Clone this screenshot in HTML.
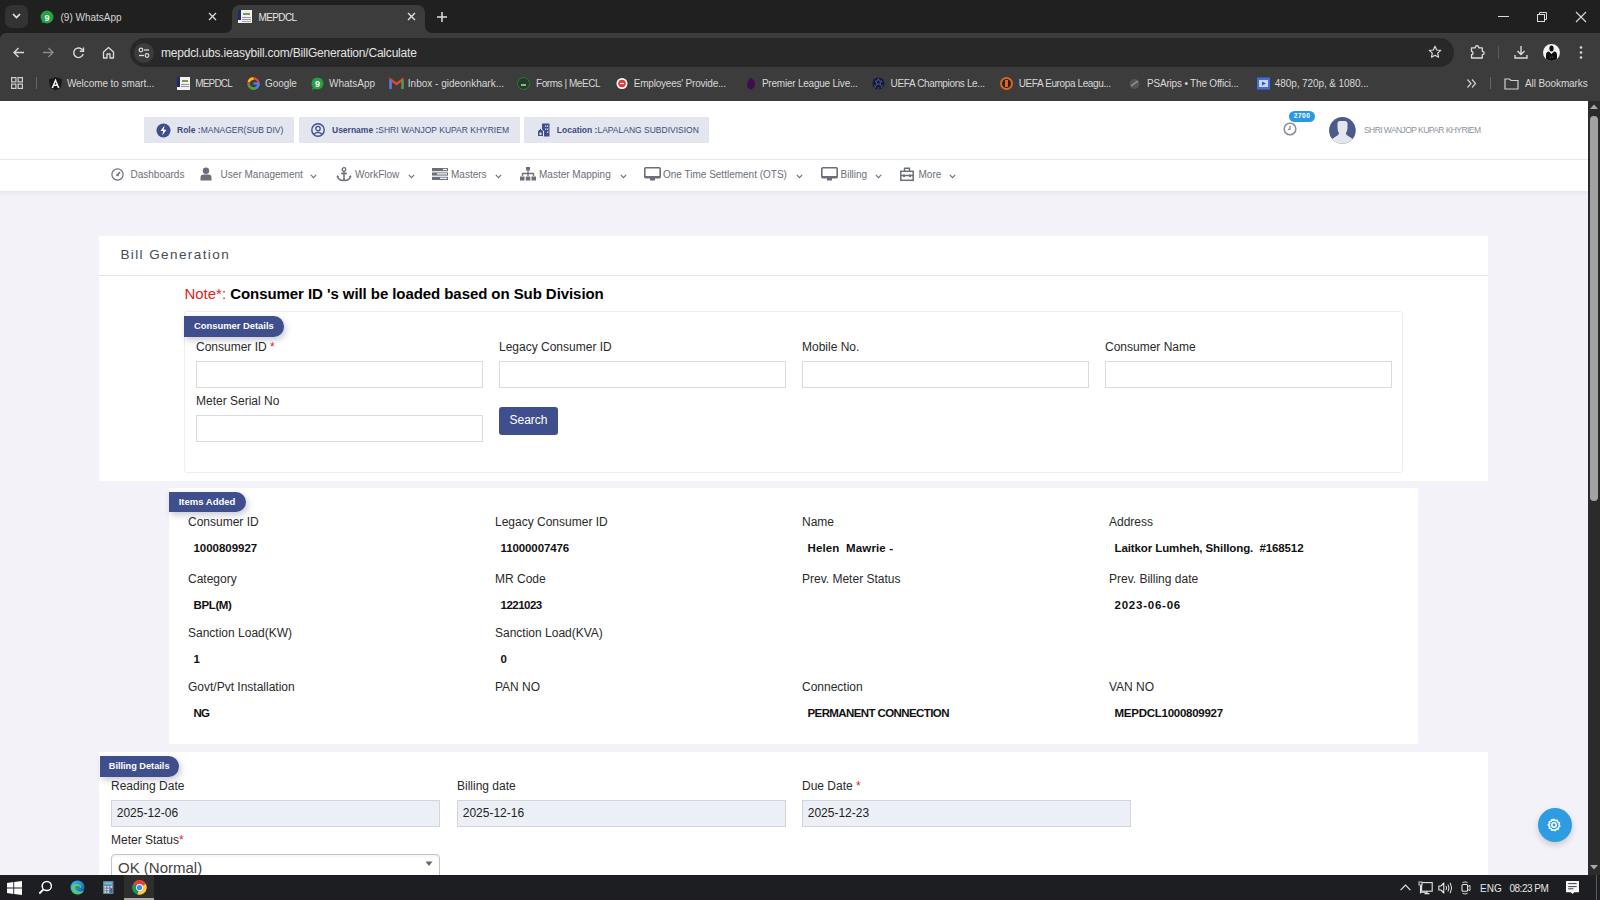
<!DOCTYPE html>
<html><head><meta charset="utf-8"><style>
html,body{margin:0;padding:0;width:1600px;height:900px;overflow:hidden;background:#202020;position:relative;font-family:"Liberation Sans",sans-serif}
.t{position:absolute;white-space:pre;line-height:1}
svg{overflow:visible}
</style></head><body>
<div style="position:absolute;left:0px;top:0px;width:1600px;height:33px;background:#202020"></div>
<div style="position:absolute;left:0px;top:33px;width:1600px;height:68px;background:#3c3c3c;border-top-left-radius:6px"></div>
<div style="position:absolute;left:5px;top:5px;width:23px;height:23px;background:#333;border-radius:7px"></div>
<svg style="position:absolute;left:11px;top:12px;" width="11" height="8" viewBox="0 0 11 8"><path d="M2 2 L5.5 5.5 L9 2" stroke="#e8e8e8" stroke-width="1.6" fill="none"/></svg>
<svg style="position:absolute;left:40px;top:10px;" width="14" height="14" viewBox="0 0 14 14"><circle cx="7" cy="7" r="6.5" fill="#25a244"/><path d="M1.5 13 L3 9.5 L5 12 Z" fill="#25a244"/><text x="7" y="10.5" font-size="9" font-weight="700" fill="#fff" text-anchor="middle" font-family="Liberation Sans">9</text></svg>
<div class="t" style="left:60.5px;top:12.54px;font-size:10px;font-weight:400;color:#d5d5d5;letter-spacing:0px;">(9) WhatsApp</div>
<svg style="position:absolute;left:207px;top:11px;" width="11" height="11" viewBox="0 0 11 11"><path d="M2 2 L9 9 M9 2 L2 9" stroke="#d8d8d8" stroke-width="1.4"/></svg>
<div style="position:absolute;left:232px;top:5px;width:193px;height:30px;background:#3c3c3c;border-radius:8px 8px 0 0"></div>
<svg style="position:absolute;left:224px;top:25px;" width="8" height="8" viewBox="0 0 8 8"><path d="M8 0 V8 H0 Q8 8 8 0 Z" fill="#3c3c3c"/></svg>
<svg style="position:absolute;left:425px;top:25px;" width="8" height="8" viewBox="0 0 8 8"><path d="M0 0 V8 H8 Q0 8 0 0 Z" fill="#3c3c3c"/></svg>
<svg style="position:absolute;left:238px;top:10px;" width="14" height="13" viewBox="0 0 14 13"><rect x="0" y="0" width="14" height="13" fill="#f2f2f2"/><rect x="0" y="0" width="3" height="10" fill="#1b2a6b"/><rect x="5" y="3" width="7" height="2" fill="#7a9a5a"/><rect x="4" y="7" width="9" height="1" fill="#999"/><rect x="4" y="9" width="9" height="1" fill="#999"/><rect x="4" y="11" width="9" height="1" fill="#aaa"/></svg>
<div class="t" style="left:258.5px;top:12.54px;font-size:10px;font-weight:400;color:#e6e6e6;letter-spacing:-0.6px;">MEPDCL</div>
<svg style="position:absolute;left:406px;top:11px;" width="11" height="11" viewBox="0 0 11 11"><path d="M2 2 L9 9 M9 2 L2 9" stroke="#e0e0e0" stroke-width="1.4"/></svg>
<svg style="position:absolute;left:436px;top:11px;" width="12" height="12" viewBox="0 0 12 12"><path d="M6 1 V11 M1 6 H11" stroke="#e0e0e0" stroke-width="1.5"/></svg>
<svg style="position:absolute;left:1497px;top:11px;" width="13" height="11" viewBox="0 0 13 11"><path d="M1 5.5 H12" stroke="#dcdcdc" stroke-width="1"/></svg>
<svg style="position:absolute;left:1536px;top:11px;" width="12" height="12" viewBox="0 0 12 12"><rect x="1.5" y="3.5" width="7" height="7" stroke="#dcdcdc" fill="none"/><path d="M3.5 3.5 V1.5 H10.5 V8.5 H8.5" stroke="#dcdcdc" fill="none"/></svg>
<svg style="position:absolute;left:1575px;top:11px;" width="12" height="12" viewBox="0 0 12 12"><path d="M1 1 L11 11 M11 1 L1 11" stroke="#dcdcdc" stroke-width="1.1"/></svg>
<svg style="position:absolute;left:12px;top:46px;" width="13" height="13" viewBox="0 0 13 13"><path d="M12 6.5 H2 M6.5 2 L2 6.5 L6.5 11" stroke="#dadada" stroke-width="1.4" fill="none"/></svg>
<svg style="position:absolute;left:42px;top:46px;" width="13" height="13" viewBox="0 0 13 13"><path d="M1 6.5 H11 M6.5 2 L11 6.5 L6.5 11" stroke="#8a8a8a" stroke-width="1.4" fill="none"/></svg>
<svg style="position:absolute;left:72px;top:46px;" width="13" height="13" viewBox="0 0 13 13"><path d="M10.8 4.5 A4.8 4.8 0 1 0 11.2 8" stroke="#dadada" stroke-width="1.4" fill="none"/><path d="M11.5 1.5 V5.2 H7.8" stroke="#dadada" stroke-width="1.4" fill="none"/></svg>
<svg style="position:absolute;left:102px;top:46px;" width="13" height="13" viewBox="0 0 13 13"><path d="M1.5 6 L6.5 1.5 L11.5 6 V12 H8 V8 H5 V12 H1.5 Z" stroke="#dadada" stroke-width="1.3" fill="none" stroke-linejoin="round"/></svg>
<div style="position:absolute;left:130px;top:38px;width:1324px;height:29px;background:#282828;border-radius:15px"></div>
<div style="position:absolute;left:134px;top:42.5px;width:20px;height:20px;background:#3c3c3c;border-radius:10px"></div>
<svg style="position:absolute;left:137px;top:46px;" width="14" height="14" viewBox="0 0 14 14"><circle cx="4" cy="4" r="1.8" stroke="#dcdcdc" stroke-width="1.2" fill="none"/><path d="M7 4 H12" stroke="#dcdcdc" stroke-width="1.3"/><circle cx="10" cy="9.5" r="1.8" stroke="#dcdcdc" stroke-width="1.2" fill="none"/><path d="M2 9.5 H7" stroke="#dcdcdc" stroke-width="1.3"/></svg>
<div class="t" style="left:161px;top:46.84px;font-size:12px;font-weight:400;color:#e3e3e3;letter-spacing:-0.2px;">mepdcl.ubs.ieasybill.com/BillGeneration/Calculate</div>
<svg style="position:absolute;left:1428px;top:45px;" width="14" height="14" viewBox="0 0 14 14"><path d="M7 1.3 L8.7 5 L12.7 5.4 L9.7 8.1 L10.5 12.2 L7 10.2 L3.5 12.2 L4.3 8.1 L1.3 5.4 L5.3 5 Z" stroke="#dadada" stroke-width="1.2" fill="none" stroke-linejoin="round"/></svg>
<svg style="position:absolute;left:1470px;top:44px;" width="16" height="16" viewBox="0 0 16 16"><path d="M1.5 3.8 H5.3 Q5.3 1.6 7 1.6 Q8.7 1.6 8.7 3.8 H12.3 V7.3 Q14.2 7.3 14.2 9 Q14.2 10.7 12.3 10.7 V14 H1.5 V10.6 Q3 10.6 3 9 Q3 7.4 1.5 7.4 Z" stroke="#dadada" stroke-width="1.3" fill="none" stroke-linejoin="round"/></svg>
<div style="position:absolute;left:1498px;top:46px;width:1px;height:13px;background:#5a5a5a"></div>
<svg style="position:absolute;left:1513px;top:44px;" width="16" height="16" viewBox="0 0 16 16"><path d="M8 2 V10 M4.5 7 L8 10.5 L11.5 7 M2 11 V14 H14 V11" stroke="#dadada" stroke-width="1.4" fill="none"/></svg>
<svg style="position:absolute;left:1543px;top:44px;" width="17" height="17" viewBox="0 0 17 17"><defs><clipPath id="pf"><circle cx="8.5" cy="8.5" r="8.5"/></clipPath></defs><circle cx="8.5" cy="8.5" r="8.5" fill="#f2f2f2"/><g clip-path="url(#pf)" fill="#0e0e0e"><ellipse cx="8.5" cy="4.6" rx="2.1" ry="3"/><path d="M3 18 V11 Q3 8 6 7.6 L8.5 10 L11 7.6 Q14 8 14 11 V18 Z"/></g><circle cx="7.3" cy="13" r="0.6" fill="#777"/><circle cx="9.7" cy="13" r="0.6" fill="#777"/></svg>
<svg style="position:absolute;left:1578px;top:45px;" width="6" height="15" viewBox="0 0 6 15"><circle cx="3" cy="2.5" r="1.3" fill="#dadada"/><circle cx="3" cy="7.5" r="1.3" fill="#dadada"/><circle cx="3" cy="12.5" r="1.3" fill="#dadada"/></svg>
<svg style="position:absolute;left:11px;top:77px;" width="12" height="12" viewBox="0 0 12 12"><rect x="0.6" y="0.6" width="4.3" height="4.3" stroke="#d0d0d0" stroke-width="1.2" fill="none"/><rect x="7.1" y="0.6" width="4.3" height="4.3" stroke="#d0d0d0" stroke-width="1.2" fill="none"/><rect x="0.6" y="7.1" width="4.3" height="4.3" stroke="#d0d0d0" stroke-width="1.2" fill="none"/><rect x="7.1" y="7.1" width="4.3" height="4.3" stroke="#d0d0d0" stroke-width="1.2" fill="none"/></svg>
<div style="position:absolute;left:35.5px;top:77px;width:1px;height:12px;background:#666"></div>
<svg style="position:absolute;left:49px;top:77px;" width="13" height="13" viewBox="0 0 13 13"><path d="M6.5 0 L13 2.3 L12 10.5 L6.5 13.5 L1 10.5 L0 2.3 Z" fill="#1a1a1a"/><path d="M6.5 1.5 L10.5 11 H8.8 L8 9 H5 L4.2 11 H2.5 Z M5.6 7.6 H7.4 L6.5 5.2 Z" fill="#f0f0f0"/></svg>
<div class="t" style="left:66.9px;top:78.53px;font-size:10px;font-weight:400;color:#d9d9d9;letter-spacing:-0.07px;">Welcome to smart...</div>
<svg style="position:absolute;left:176.5px;top:77px;" width="13" height="13" viewBox="0 0 13 13"><rect x="0" y="0" width="13" height="13" fill="#f2f2f2"/><rect x="0" y="0" width="3" height="10" fill="#1b2a6b"/><rect x="5" y="3" width="6" height="2" fill="#7a9a5a"/><rect x="4" y="7" width="8" height="1" fill="#999"/><rect x="4" y="9" width="8" height="1" fill="#999"/></svg>
<div class="t" style="left:195.3px;top:78.53px;font-size:10px;font-weight:400;color:#d9d9d9;letter-spacing:-0.84px;">MEPDCL</div>
<svg style="position:absolute;left:247px;top:77px;" width="13" height="13" viewBox="0 0 13 13"><circle cx="6.5" cy="6.5" r="5" stroke="#ea4335" stroke-width="2.4" fill="none"/><path d="M6.5 1.5 A5 5 0 0 0 1.7 5" stroke="#fbbc05" stroke-width="2.4" fill="none"/><path d="M1.6 7.5 A5 5 0 0 0 9 10.9" stroke="#34a853" stroke-width="2.4" fill="none"/><path d="M9 10.9 A5 5 0 0 0 11.5 6.5" stroke="#4285f4" stroke-width="2.4" fill="none"/><rect x="6.5" y="5.4" width="5.8" height="2.2" fill="#4285f4"/></svg>
<div class="t" style="left:265px;top:78.53px;font-size:10px;font-weight:400;color:#d9d9d9;letter-spacing:-0.07px;">Google</div>
<svg style="position:absolute;left:311px;top:77px;" width="13" height="13" viewBox="0 0 13 13"><circle cx="6.5" cy="6.5" r="6" fill="#25a244"/><path d="M1 13 L2.5 9 L4.5 11.5 Z" fill="#25a244"/><text x="6.5" y="10" font-size="9" font-weight="700" fill="#fff" text-anchor="middle" font-family="Liberation Sans">9</text></svg>
<div class="t" style="left:329px;top:78.53px;font-size:10px;font-weight:400;color:#d9d9d9;letter-spacing:0px;">WhatsApp</div>
<svg style="position:absolute;left:389.7px;top:77px;" width="13" height="13" viewBox="0 0 13 13"><path d="M0.5 12 V2.5 L6.5 7 L12.5 2.5 V12" stroke="#ea4335" stroke-width="2.2" fill="none"/><path d="M0.5 12 V3" stroke="#4285f4" stroke-width="2.2"/><path d="M12.5 12 V3" stroke="#34a853" stroke-width="2.2"/></svg>
<div class="t" style="left:407.8px;top:78.53px;font-size:10px;font-weight:400;color:#d9d9d9;letter-spacing:0px;">Inbox - gideonkhark...</div>
<svg style="position:absolute;left:517px;top:77px;" width="13" height="13" viewBox="0 0 13 13"><circle cx="6.5" cy="6.5" r="6" fill="#1e3d2a" stroke="#2b7a3b" stroke-width="1"/><rect x="4" y="7" width="5" height="2" fill="#b9a27a"/></svg>
<div class="t" style="left:536px;top:78.53px;font-size:10px;font-weight:400;color:#d9d9d9;letter-spacing:-0.44px;">Forms | MeECL</div>
<svg style="position:absolute;left:616px;top:77px;" width="13" height="13" viewBox="0 0 13 13"><circle cx="6" cy="6.5" r="5.5" fill="#fff"/><circle cx="6" cy="6.5" r="3.8" fill="#e23a3a"/><path d="M4 6.5 H8" stroke="#fff" stroke-width="1.2"/></svg>
<div class="t" style="left:633.75px;top:78.53px;font-size:10px;font-weight:400;color:#d9d9d9;letter-spacing:-0.21px;">Employees&#39; Provide...</div>
<svg style="position:absolute;left:745px;top:77px;" width="13" height="13" viewBox="0 0 13 13"><path d="M5 1 Q9 2 10 6 Q10.5 11 6 12.5 Q2 11.5 2 8 Q2.5 4 5 1 Z" fill="#3d0d4f"/></svg>
<div class="t" style="left:761.9px;top:78.53px;font-size:10px;font-weight:400;color:#d9d9d9;letter-spacing:-0.22px;">Premier League Live...</div>
<svg style="position:absolute;left:872px;top:77px;" width="13" height="13" viewBox="0 0 13 13"><circle cx="6.5" cy="6.5" r="6" fill="#141a3c"/><path d="M6.5 1.5 L7.5 4 L10 4.2 L8 5.8 L8.7 8.3 L6.5 6.9 L4.3 8.3 L5 5.8 L3 4.2 L5.5 4 Z M2 8.5 L3.5 9 L3 11 M11 8.5 L9.5 9 L10 11 M6.5 10 V12" stroke="#5a6290" stroke-width="0.8" fill="none"/></svg>
<div class="t" style="left:890.6px;top:78.53px;font-size:10px;font-weight:400;color:#d9d9d9;letter-spacing:-0.36px;">UEFA Champions Le...</div>
<svg style="position:absolute;left:1000px;top:77px;" width="13" height="13" viewBox="0 0 13 13"><circle cx="6.5" cy="6.5" r="5.5" stroke="#e0661b" stroke-width="2" fill="#222"/><rect x="5" y="3" width="3" height="7" fill="#e0661b"/></svg>
<div class="t" style="left:1018.7px;top:78.53px;font-size:10px;font-weight:400;color:#d9d9d9;letter-spacing:-0.38px;">UEFA Europa Leagu...</div>
<svg style="position:absolute;left:1127.5px;top:77px;" width="13" height="13" viewBox="0 0 13 13"><circle cx="6.5" cy="7" r="5" fill="#555"/><path d="M3 9 L10 4" stroke="#999" stroke-width="1.5"/></svg>
<div class="t" style="left:1147px;top:78.53px;font-size:10px;font-weight:400;color:#d9d9d9;letter-spacing:-0.19px;">PSArips &bull; The Offici...</div>
<svg style="position:absolute;left:1256.8px;top:77px;" width="13" height="13" viewBox="0 0 13 13"><rect x="0" y="0.5" width="13" height="12" fill="#3f6fd8"/><rect x="2" y="3" width="9" height="7" fill="#c8d6f5"/><path d="M5 4.5 L9 6.5 L5 8.5 Z" fill="#2a56c0"/></svg>
<div class="t" style="left:1274.8px;top:78.53px;font-size:10px;font-weight:400;color:#d9d9d9;letter-spacing:-0.09px;">480p, 720p, &amp; 1080...</div>
<svg style="position:absolute;left:1466px;top:78px;" width="11" height="11" viewBox="0 0 11 11"><path d="M1.5 1.5 L5 5.5 L1.5 9.5 M6 1.5 L9.5 5.5 L6 9.5" stroke="#d0d0d0" stroke-width="1.2" fill="none"/></svg>
<div style="position:absolute;left:1490px;top:77px;width:1px;height:12px;background:#666"></div>
<svg style="position:absolute;left:1504px;top:77px;" width="15" height="13" viewBox="0 0 15 13"><path d="M1 2 H5.5 L7 3.5 H14 V12 H1 Z" stroke="#d0d0d0" stroke-width="1.2" fill="none"/></svg>
<div class="t" style="left:1525px;top:78.53px;font-size:10px;font-weight:400;color:#d9d9d9;letter-spacing:-0.1px;">All Bookmarks</div>
<div style="position:absolute;left:0px;top:101px;width:1588px;height:774px;background:#f2f2f8"></div>
<div style="position:absolute;left:0px;top:101px;width:1588px;height:58px;background:#fff"></div>
<div style="position:absolute;left:0px;top:159px;width:1588px;height:1px;background:#e9e9ee"></div>
<div style="position:absolute;left:0px;top:160px;width:1588px;height:31px;background:#fff;box-shadow:0 2px 4px rgba(0,0,0,0.06)"></div>
<div style="position:absolute;left:144px;top:117px;width:150px;height:26px;background:#e3e6ee"></div>
<div style="position:absolute;left:298.5px;top:117px;width:221.5px;height:26px;background:#e3e6ee"></div>
<div style="position:absolute;left:524px;top:117px;width:185px;height:26px;background:#e3e6ee"></div>
<svg style="position:absolute;left:156px;top:123px;" width="15" height="15" viewBox="0 0 15 15"><circle cx="7.5" cy="7.5" r="7" fill="#3f4e8c"/><path d="M8.5 2.5 L4.5 8 H7.2 L6.2 12.5 L10.5 6.8 H7.8 Z" fill="#fff"/></svg>
<div class="t" style="left:177px;top:126.00px;font-size:8.5px;font-weight:400;color:#3d4a7a;letter-spacing:0px;"><b>Role :</b>MANAGER(SUB DIV)</div>
<svg style="position:absolute;left:311px;top:123px;" width="14" height="14" viewBox="0 0 14 14"><circle cx="7" cy="7" r="6.2" stroke="#3f4e8c" stroke-width="1.4" fill="none"/><circle cx="7" cy="5.6" r="2.2" stroke="#3f4e8c" stroke-width="1.3" fill="none"/><path d="M3 11.3 Q7 7.5 11 11.3" stroke="#3f4e8c" stroke-width="1.3" fill="none"/></svg>
<div class="t" style="left:332px;top:126.00px;font-size:8.5px;font-weight:400;color:#3d4a7a;letter-spacing:0px;"><b>Username :</b>SHRI WANJOP KUPAR KHYRIEM</div>
<svg style="position:absolute;left:536.5px;top:123px;" width="13" height="14" viewBox="0 0 13 14"><path d="M5 0.5 H12.5 V13.5 H5 Z" fill="#3f4e8c"/><path d="M0.5 13.5 V8 L3.5 5.5 L6.5 8 V13.5 Z" fill="#3f4e8c" stroke="#e3e6ee" stroke-width="1"/><rect x="2.5" y="9.5" width="2" height="2.5" fill="#e3e6ee"/><rect x="8" y="2.5" width="1.3" height="1.3" fill="#e3e6ee"/><rect x="10" y="2.5" width="1.3" height="1.3" fill="#e3e6ee"/><rect x="8" y="5.5" width="1.3" height="1.3" fill="#e3e6ee"/><rect x="10" y="5.5" width="1.3" height="1.3" fill="#e3e6ee"/><rect x="10" y="8.5" width="1.3" height="1.3" fill="#e3e6ee"/></svg>
<div class="t" style="left:556.8px;top:126.00px;font-size:8.5px;font-weight:400;color:#3d4a7a;letter-spacing:0px;"><b>Location :</b>LAPALANG SUBDIVISION</div>
<svg style="position:absolute;left:1283px;top:122px;" width="14" height="14" viewBox="0 0 14 14"><circle cx="7" cy="7" r="5.8" stroke="#8a8f9a" stroke-width="1.6" fill="none"/><path d="M7 3.8 V7.3 H4.8" stroke="#8a8f9a" stroke-width="1.3" fill="none"/></svg>
<div style="position:absolute;left:1289px;top:111px;width:26px;height:11px;background:#2a9ae0;border-radius:6px"></div>
<div class="t" style="left:1293.8px;top:112.71px;font-size:6.6px;font-weight:700;color:#fff;letter-spacing:0.45px;">2700</div>
<svg style="position:absolute;left:1329px;top:116.5px;" width="27" height="27" viewBox="0 0 27 27"><defs><clipPath id="av"><circle cx="13.4" cy="13.4" r="13.3"/></clipPath></defs><circle cx="13.4" cy="13.4" r="13.3" fill="#4d5a8c"/><g clip-path="url(#av)"><path d="M8.5 6.5 Q8.5 4 11 4 H15.8 Q18.5 4 18.5 6.5 V11 Q18.5 14 16.8 16 Q17 18.5 20 19.5 Q25 22 27 25.5 V28 H0 V25.5 Q2 22 6.8 19.5 Q9.8 18.5 10 16 Q8.5 14 8.5 11 Z" fill="#e3e6ec"/></g></svg>
<div class="t" style="left:1364px;top:125.80px;font-size:8.5px;font-weight:400;color:#8d929c;letter-spacing:-0.57px;">SHRI WANJOP KUPAR KHYRIEM</div>
<svg style="position:absolute;left:111px;top:168px;" width="13" height="13" viewBox="0 0 13 13"><circle cx="6.5" cy="6.5" r="5.6" stroke="#6b6f78" stroke-width="1.2" fill="none"/><path d="M6.5 7 L9 4" stroke="#6b6f78" stroke-width="1.4"/><circle cx="6.5" cy="7" r="1.3" fill="#6b6f78"/></svg>
<div class="t" style="left:130.5px;top:170.34px;font-size:10px;font-weight:400;color:#6b6f78;letter-spacing:0px;">Dashboards</div>
<svg style="position:absolute;left:200px;top:167px;" width="12" height="14" viewBox="0 0 12 14"><circle cx="6" cy="3.8" r="3.2" fill="#6b6f78"/><path d="M0.5 13.5 V10.5 Q0.5 7.5 3.5 7.5 H8.5 Q11.5 7.5 11.5 10.5 V13.5 Z" fill="#6b6f78"/></svg>
<div class="t" style="left:220.6px;top:170.34px;font-size:10px;font-weight:400;color:#6b6f78;letter-spacing:0px;">User Management</div>
<svg style="position:absolute;left:310.4px;top:173.5px;" width="7" height="5" viewBox="0 0 7 5"><path d="M0.8 0.8 L3.5 3.6 L6.2 0.8" stroke="#6b6f78" stroke-width="1.1" fill="none"/></svg>
<svg style="position:absolute;left:335.5px;top:167px;" width="16" height="15" viewBox="0 0 16 15"><circle cx="8" cy="2.5" r="1.8" stroke="#6b6f78" stroke-width="1.3" fill="none"/><path d="M8 4.3 V13.5 M5 6.5 H11 M1.5 9 Q2 13.5 8 13.5 Q14 13.5 14.5 9" stroke="#6b6f78" stroke-width="1.6" fill="none"/><path d="M0.5 10 L1.5 8 L3 10 Z M12.8 10 L14.5 8 L15.5 10 Z" fill="#6b6f78"/></svg>
<div class="t" style="left:355px;top:170.34px;font-size:10px;font-weight:400;color:#6b6f78;letter-spacing:0px;">WorkFlow</div>
<svg style="position:absolute;left:407.9px;top:173.5px;" width="7" height="5" viewBox="0 0 7 5"><path d="M0.8 0.8 L3.5 3.6 L6.2 0.8" stroke="#6b6f78" stroke-width="1.1" fill="none"/></svg>
<svg style="position:absolute;left:432px;top:168px;" width="16" height="12" viewBox="0 0 16 12"><rect x="0" y="0" width="16" height="3.2" fill="#6b6f78"/><rect x="0" y="4.4" width="16" height="3.2" fill="#6b6f78"/><rect x="0" y="8.8" width="16" height="3.2" fill="#6b6f78"/><rect x="11" y="0.9" width="4" height="1.2" fill="#fff"/><rect x="5" y="5.3" width="10" height="1.2" fill="#fff"/><rect x="8" y="9.7" width="7" height="1.2" fill="#fff"/></svg>
<div class="t" style="left:451px;top:170.34px;font-size:10px;font-weight:400;color:#6b6f78;letter-spacing:0px;">Masters</div>
<svg style="position:absolute;left:494.9px;top:173.5px;" width="7" height="5" viewBox="0 0 7 5"><path d="M0.8 0.8 L3.5 3.6 L6.2 0.8" stroke="#6b6f78" stroke-width="1.1" fill="none"/></svg>
<svg style="position:absolute;left:519.5px;top:167px;" width="16" height="14" viewBox="0 0 16 14"><rect x="6" y="0" width="4" height="3.5" fill="#6b6f78"/><path d="M8 3.5 V6.5 M2.5 9 V6.5 H13.5 V9 M8 6.5 V9" stroke="#6b6f78" stroke-width="1.3" fill="none"/><rect x="0" y="9.5" width="4.5" height="4" fill="#6b6f78"/><rect x="5.8" y="9.5" width="4.5" height="4" fill="#6b6f78"/><rect x="11.5" y="9.5" width="4.5" height="4" fill="#6b6f78"/></svg>
<div class="t" style="left:539px;top:170.34px;font-size:10px;font-weight:400;color:#6b6f78;letter-spacing:0px;">Master Mapping</div>
<svg style="position:absolute;left:619.9px;top:173.5px;" width="7" height="5" viewBox="0 0 7 5"><path d="M0.8 0.8 L3.5 3.6 L6.2 0.8" stroke="#6b6f78" stroke-width="1.1" fill="none"/></svg>
<svg style="position:absolute;left:643.5px;top:167px;" width="17" height="14" viewBox="0 0 17 14"><rect x="0.8" y="0.8" width="15.4" height="10" rx="1" stroke="#6b6f78" stroke-width="1.6" fill="none"/><rect x="1" y="9" width="15" height="2" fill="#6b6f78"/><rect x="6" y="11" width="5" height="2.5" fill="#6b6f78"/></svg>
<div class="t" style="left:663px;top:170.34px;font-size:10px;font-weight:400;color:#6b6f78;letter-spacing:0px;">One Time Settlement (OTS)</div>
<svg style="position:absolute;left:796.4px;top:173.5px;" width="7" height="5" viewBox="0 0 7 5"><path d="M0.8 0.8 L3.5 3.6 L6.2 0.8" stroke="#6b6f78" stroke-width="1.1" fill="none"/></svg>
<svg style="position:absolute;left:821px;top:167px;" width="17" height="14" viewBox="0 0 17 14"><rect x="0.8" y="0.8" width="15.4" height="10" rx="1" stroke="#6b6f78" stroke-width="1.6" fill="none"/><rect x="1" y="9" width="15" height="2" fill="#6b6f78"/><rect x="6" y="11" width="5" height="2.5" fill="#6b6f78"/></svg>
<div class="t" style="left:840.5px;top:170.34px;font-size:10px;font-weight:400;color:#6b6f78;letter-spacing:0px;">Billing</div>
<svg style="position:absolute;left:875.4px;top:173.5px;" width="7" height="5" viewBox="0 0 7 5"><path d="M0.8 0.8 L3.5 3.6 L6.2 0.8" stroke="#6b6f78" stroke-width="1.1" fill="none"/></svg>
<svg style="position:absolute;left:900px;top:167px;" width="14" height="14" viewBox="0 0 14 14"><rect x="0.8" y="4.3" width="12.4" height="9" stroke="#6b6f78" stroke-width="1.5" fill="none"/><path d="M4.5 4.3 V1.3 H9.5 V4.3 M0.8 8.5 H13.2" stroke="#6b6f78" stroke-width="1.4" fill="none"/><rect x="3" y="7.5" width="2" height="2.5" fill="#6b6f78"/><rect x="9" y="7.5" width="2" height="2.5" fill="#6b6f78"/></svg>
<div class="t" style="left:918.5px;top:170.34px;font-size:10px;font-weight:400;color:#6b6f78;letter-spacing:0px;">More</div>
<svg style="position:absolute;left:949.4px;top:173.5px;" width="7" height="5" viewBox="0 0 7 5"><path d="M0.8 0.8 L3.5 3.6 L6.2 0.8" stroke="#6b6f78" stroke-width="1.1" fill="none"/></svg>
<div style="position:absolute;left:99px;top:236px;width:1389px;height:245px;background:#fff"></div>
<div style="position:absolute;left:99px;top:275px;width:1389px;height:1px;background:#e4e4e8"></div>
<div class="t" style="left:120.4px;top:247.97px;font-size:13.5px;font-weight:400;color:#464b55;letter-spacing:1.41px;">Bill Generation</div>
<div class="t" style="left:184.4px;top:286.30px;font-size:15px;font-weight:400;color:#000;letter-spacing:0px;"><span style="color:#e02424">Note*:</span> <b style="color:#000;letter-spacing:-0.07px">Consumer ID 's will be loaded based on Sub Division</b></div>
<div style="position:absolute;left:184px;top:311px;width:1219px;height:161.5px;border:1px solid #eeeef1;border-radius:3px;box-sizing:border-box"></div>
<div style="position:absolute;left:184px;top:316px;width:100px;height:20.5px;background:#3f4e8c;border-radius:0 10.25px 10.25px 0;box-shadow:2px 3px 6px rgba(40,50,90,0.25)"></div>
<div class="t" style="left:194px;top:321.34px;font-size:9.4px;font-weight:700;color:#fff;letter-spacing:0px;">Consumer Details</div>
<div class="t" style="left:196px;top:341.34px;font-size:12px;font-weight:400;color:#2a2a2a;letter-spacing:0px;">Consumer ID <span style="color:#e02424">*</span></div>
<div class="t" style="left:499px;top:341.34px;font-size:12px;font-weight:400;color:#2a2a2a;letter-spacing:0px;">Legacy Consumer ID</div>
<div class="t" style="left:802px;top:341.34px;font-size:12px;font-weight:400;color:#2a2a2a;letter-spacing:0px;">Mobile No.</div>
<div class="t" style="left:1105px;top:341.34px;font-size:12px;font-weight:400;color:#2a2a2a;letter-spacing:0px;">Consumer Name</div>
<div style="position:absolute;left:196px;top:361px;width:287px;height:27px;background:#fff;border:1px solid #dadbde;box-sizing:border-box"></div>
<div style="position:absolute;left:499px;top:361px;width:287px;height:27px;background:#fff;border:1px solid #dadbde;box-sizing:border-box"></div>
<div style="position:absolute;left:802px;top:361px;width:287px;height:27px;background:#fff;border:1px solid #dadbde;box-sizing:border-box"></div>
<div style="position:absolute;left:1105px;top:361px;width:287px;height:27px;background:#fff;border:1px solid #dadbde;box-sizing:border-box"></div>
<div class="t" style="left:196px;top:395.34px;font-size:12px;font-weight:400;color:#2a2a2a;letter-spacing:0px;">Meter Serial No</div>
<div style="position:absolute;left:196px;top:415px;width:287px;height:27px;background:#fff;border:1px solid #dadbde;box-sizing:border-box"></div>
<div style="position:absolute;left:499px;top:407px;width:59px;height:28px;background:#3f4e8c;border-radius:3px"></div>
<div class="t" style="left:509.5px;top:414.34px;font-size:12px;font-weight:400;color:#fff;letter-spacing:0px;">Search</div>
<div style="position:absolute;left:168.5px;top:488px;width:1249.5px;height:256px;background:#fff"></div>
<div style="position:absolute;left:168.5px;top:492px;width:77px;height:20px;background:#3f4e8c;border-radius:0 10.0px 10.0px 0;box-shadow:2px 3px 6px rgba(40,50,90,0.25)"></div>
<div class="t" style="left:178.7px;top:497.46px;font-size:9.5px;font-weight:700;color:#fff;letter-spacing:0px;">Items Added</div>
<div class="t" style="left:188px;top:516.14px;font-size:12px;font-weight:400;color:#2a2a2a;letter-spacing:0px;">Consumer ID</div>
<div class="t" style="left:193.5px;top:543.07px;font-size:11.5px;font-weight:700;color:#111;letter-spacing:-0.03px;">1000809927</div>
<div class="t" style="left:495px;top:516.14px;font-size:12px;font-weight:400;color:#2a2a2a;letter-spacing:0px;">Legacy Consumer ID</div>
<div class="t" style="left:500.5px;top:543.07px;font-size:11.5px;font-weight:700;color:#111;letter-spacing:-0.1px;">11000007476</div>
<div class="t" style="left:802px;top:516.14px;font-size:12px;font-weight:400;color:#2a2a2a;letter-spacing:0px;">Name</div>
<div class="t" style="left:807.5px;top:543.07px;font-size:11.5px;font-weight:700;color:#111;letter-spacing:0.13px;">Helen&nbsp; Mawrie -</div>
<div class="t" style="left:1109px;top:516.14px;font-size:12px;font-weight:400;color:#2a2a2a;letter-spacing:0px;">Address</div>
<div class="t" style="left:1114.5px;top:543.07px;font-size:11.5px;font-weight:700;color:#111;letter-spacing:-0.1px;">Laitkor Lumheh, Shillong.&nbsp; #168512</div>
<div class="t" style="left:188px;top:572.84px;font-size:12px;font-weight:400;color:#2a2a2a;letter-spacing:0px;">Category</div>
<div class="t" style="left:193.5px;top:599.57px;font-size:11.5px;font-weight:700;color:#111;letter-spacing:-0.37px;">BPL(M)</div>
<div class="t" style="left:495px;top:572.84px;font-size:12px;font-weight:400;color:#2a2a2a;letter-spacing:0px;">MR Code</div>
<div class="t" style="left:500.5px;top:599.57px;font-size:11.5px;font-weight:700;color:#111;letter-spacing:-0.5px;">1221023</div>
<div class="t" style="left:802px;top:572.84px;font-size:12px;font-weight:400;color:#2a2a2a;letter-spacing:0px;">Prev. Meter Status</div>
<div class="t" style="left:1109px;top:572.84px;font-size:12px;font-weight:400;color:#2a2a2a;letter-spacing:0px;">Prev. Billing date</div>
<div class="t" style="left:1114.5px;top:599.57px;font-size:11.5px;font-weight:700;color:#111;letter-spacing:0.77px;">2023-06-06</div>
<div class="t" style="left:188px;top:627.14px;font-size:12px;font-weight:400;color:#2a2a2a;letter-spacing:0px;">Sanction Load(KW)</div>
<div class="t" style="left:193.5px;top:653.77px;font-size:11.5px;font-weight:700;color:#111;letter-spacing:0px;">1</div>
<div class="t" style="left:495px;top:627.14px;font-size:12px;font-weight:400;color:#2a2a2a;letter-spacing:0px;">Sanction Load(KVA)</div>
<div class="t" style="left:500.5px;top:653.77px;font-size:11.5px;font-weight:700;color:#111;letter-spacing:0px;">0</div>
<div class="t" style="left:188px;top:681.34px;font-size:12px;font-weight:400;color:#2a2a2a;letter-spacing:0px;">Govt/Pvt Installation</div>
<div class="t" style="left:193.5px;top:707.77px;font-size:11.5px;font-weight:700;color:#111;letter-spacing:-0.8px;">NG</div>
<div class="t" style="left:495px;top:681.34px;font-size:12px;font-weight:400;color:#2a2a2a;letter-spacing:0px;">PAN NO</div>
<div class="t" style="left:802px;top:681.34px;font-size:12px;font-weight:400;color:#2a2a2a;letter-spacing:0px;">Connection</div>
<div class="t" style="left:807.5px;top:707.77px;font-size:11.5px;font-weight:700;color:#111;letter-spacing:-0.6px;">PERMANENT CONNECTION</div>
<div class="t" style="left:1109px;top:681.34px;font-size:12px;font-weight:400;color:#2a2a2a;letter-spacing:0px;">VAN NO</div>
<div class="t" style="left:1114.5px;top:707.77px;font-size:11.5px;font-weight:700;color:#111;letter-spacing:-0.26px;">MEPDCL1000809927</div>
<div style="position:absolute;left:99px;top:752px;width:1389px;height:123px;background:#fff"></div>
<div style="position:absolute;left:99.5px;top:756px;width:79.5px;height:21px;background:#3f4e8c;border-radius:0 10.5px 10.5px 0;box-shadow:2px 3px 6px rgba(40,50,90,0.25)"></div>
<div class="t" style="left:108.75px;top:761.71px;font-size:9.2px;font-weight:700;color:#fff;letter-spacing:0px;">Billing Details</div>
<div class="t" style="left:111px;top:780.34px;font-size:12px;font-weight:400;color:#2a2a2a;letter-spacing:0px;">Reading Date</div>
<div class="t" style="left:457px;top:780.34px;font-size:12px;font-weight:400;color:#2a2a2a;letter-spacing:0px;">Billing date</div>
<div class="t" style="left:802px;top:780.34px;font-size:12px;font-weight:400;color:#2a2a2a;letter-spacing:0px;">Due Date <span style="color:#e02424">*</span></div>
<div style="position:absolute;left:111px;top:800px;width:329px;height:27px;background:#ecf0f6;border:1px solid #d0d5dd;box-sizing:border-box"></div>
<div class="t" style="left:116.75px;top:806.84px;font-size:12px;font-weight:400;color:#222;letter-spacing:0px;">2025-12-06</div>
<div style="position:absolute;left:457px;top:800px;width:329px;height:27px;background:#ecf0f6;border:1px solid #d0d5dd;box-sizing:border-box"></div>
<div class="t" style="left:462.75px;top:806.84px;font-size:12px;font-weight:400;color:#222;letter-spacing:0px;">2025-12-16</div>
<div style="position:absolute;left:802px;top:800px;width:329px;height:27px;background:#ecf0f6;border:1px solid #d0d5dd;box-sizing:border-box"></div>
<div class="t" style="left:807.75px;top:806.84px;font-size:12px;font-weight:400;color:#222;letter-spacing:0px;">2025-12-23</div>
<div class="t" style="left:111px;top:834.34px;font-size:12px;font-weight:400;color:#2a2a2a;letter-spacing:0px;">Meter Status<span style="color:#e02424">*</span></div>
<div style="position:absolute;left:111px;top:854px;width:329px;height:40px;background:#fff;border:1px solid #c4c4c4;border-radius:4px;box-sizing:border-box;box-shadow:inset 0 2px 2px rgba(0,0,0,0.04)"></div>
<div class="t" style="left:118px;top:859.80px;font-size:15px;font-weight:400;color:#444;letter-spacing:0px;">OK (Normal)</div>
<svg style="position:absolute;left:425px;top:861px;" width="8" height="6" viewBox="0 0 8 6"><path d="M0.5 0.5 H7.5 L4 5 Z" fill="#666"/></svg>
<div style="position:absolute;left:1537.5px;top:808px;width:34px;height:34px;background:#2e9ce0;border-radius:50%;box-shadow:0 3px 6px rgba(0,0,0,0.18)"></div>
<svg style="position:absolute;left:1547px;top:818px;" width="14" height="14" viewBox="0 0 14 14"><g fill="none" stroke="#fff" stroke-width="1.5"><path d="M7 1.2 L8.3 2.6 L10.2 2.2 L10.7 4.1 L12.5 4.8 L11.9 6.6 L12.9 8.2 L11.3 9.3 L11.2 11.2 L9.3 11.1 L8.2 12.7 L6.6 11.7 L4.8 12.3 L4.1 10.5 L2.2 10 L2.6 8.1 L1.2 6.8 L2.6 5.6 L2.3 3.7 L4.2 3.3 L5 1.5 L6.6 2.3 Z" stroke-linejoin="round"/><circle cx="7" cy="7" r="2.2"/></g></svg>
<div style="position:absolute;left:1588px;top:101px;width:12px;height:774px;background:#2b2b2b"></div>
<svg style="position:absolute;left:1589px;top:103px;" width="10" height="7" viewBox="0 0 10 7"><path d="M1 6 L5 1.5 L9 6 Z" fill="#a8a8a8"/></svg>
<div style="position:absolute;left:1590px;top:116px;width:8px;height:385px;background:#a3a3a3;border-radius:4px"></div>
<svg style="position:absolute;left:1589px;top:864px;" width="10" height="7" viewBox="0 0 10 7"><path d="M1 1 L5 5.5 L9 1 Z" fill="#a8a8a8"/></svg>
<div style="position:absolute;left:0px;top:875px;width:1600px;height:25px;background:#1c1e21"></div>
<svg style="position:absolute;left:7px;top:881px;" width="15" height="14" viewBox="0 0 15 14"><path d="M0 2 L6.3 1.1 V6.6 H0 Z M7.2 1 L15 0 V6.6 H7.2 Z M0 7.5 H6.3 V13 L0 12.1 Z M7.2 7.5 H15 V14 L7.2 13 Z" fill="#fff"/></svg>
<svg style="position:absolute;left:38px;top:880px;" width="15" height="15" viewBox="0 0 15 15"><circle cx="8.8" cy="6" r="4.6" stroke="#fff" stroke-width="1.5" fill="none"/><path d="M5.5 9.3 L1.3 13.5" stroke="#fff" stroke-width="1.8"/></svg>
<svg style="position:absolute;left:70px;top:880px;" width="15" height="15" viewBox="0 0 15 15"><defs><linearGradient id="eg" x1="0" y1="0" x2="1" y2="1"><stop offset="0" stop-color="#35c1f1"/><stop offset="0.6" stop-color="#1f7fd6"/><stop offset="1" stop-color="#114a8b"/></linearGradient></defs><circle cx="7.5" cy="7.5" r="7" fill="url(#eg)"/><path d="M1 8 Q3 3 8 4 Q12 5 11 8 H5 Q6 11 10 11.5 Q12 11.5 14 10.5 Q12 14.5 7.5 14.5 Q2 14 1 8 Z" fill="#5fd16a" opacity="0.85"/><path d="M5 8 Q5 6 7.5 6 Q10 6 10.5 8 Z" fill="#1c2a4a" opacity="0.4"/></svg>
<svg style="position:absolute;left:103px;top:881px;" width="10.5" height="13" viewBox="0 0 10.5 13"><rect x="0" y="0" width="10.5" height="13" rx="0.8" fill="#6f8194"/><rect x="1.3" y="1.3" width="7.9" height="2.2" fill="#5fc3e8"/><g fill="#dde5ee"><rect x="1.3" y="5" width="1.8" height="1.6"/><rect x="4.3" y="5" width="1.8" height="1.6"/><rect x="7.4" y="5" width="1.8" height="1.6"/><rect x="1.3" y="7.6" width="1.8" height="1.6"/><rect x="4.3" y="7.6" width="1.8" height="1.6"/><rect x="1.3" y="10.2" width="1.8" height="1.6"/><rect x="4.3" y="10.2" width="1.8" height="1.6"/></g><rect x="7.4" y="7.6" width="1.8" height="4.2" fill="#2b66b8"/></svg>
<div style="position:absolute;left:124px;top:875px;width:30px;height:25px;background:#2e2e2e"></div>
<div style="position:absolute;left:124px;top:898px;width:30px;height:2px;background:#a9a9a9"></div>
<svg style="position:absolute;left:131.5px;top:880px;" width="15" height="15" viewBox="0 0 15 15"><circle cx="7.5" cy="7.5" r="7.2" fill="#db4437"/><path d="M7.5 7.5 L1.2 4 A7.2 7.2 0 0 0 5.5 14.4 Z" fill="#0f9d58"/><path d="M7.5 7.5 L5.5 14.4 A7.2 7.2 0 0 0 14.7 7.5 L14 4 Z" fill="#ffcd40"/><path d="M7.5 4 H14 A7.2 7.2 0 0 0 1.2 4 Z" fill="#db4437"/><circle cx="7.5" cy="7.5" r="3.4" fill="#fff"/><circle cx="7.5" cy="7.5" r="2.6" fill="#4285f4"/></svg>
<svg style="position:absolute;left:1399.5px;top:884px;" width="11" height="7" viewBox="0 0 11 7"><path d="M0.6 6.2 L5.5 1 L10.4 6.2" stroke="#e6e6e6" stroke-width="1.1" fill="none"/></svg>
<svg style="position:absolute;left:1418px;top:881px;" width="16" height="14" viewBox="0 0 16 14"><rect x="3.6" y="1.6" width="10.6" height="8.6" stroke="#e6e6e6" stroke-width="1.1" fill="none"/><path d="M2.5 4.5 V12.5 M2.5 11.3 H9 M9 10.2 V12.5 M6.5 12.6 H11.5" stroke="#e6e6e6" stroke-width="1.1" fill="none"/><rect x="1" y="1" width="3" height="3" fill="#1c1e21" stroke="#e6e6e6" stroke-width="0.9"/></svg>
<svg style="position:absolute;left:1437.5px;top:881.5px;" width="15" height="12" viewBox="0 0 15 12"><path d="M0.8 4 H3 L5.8 1 V11 L3 8 H0.8 Z" stroke="#e6e6e6" stroke-width="1.1" fill="none" stroke-linejoin="round"/><path d="M8 4 Q9.3 6 8 8 M10 2.5 Q12 6 10 9.5 M12.2 0.8 Q15 6 12.2 11.2" stroke="#e6e6e6" stroke-width="1" fill="none"/></svg>
<svg style="position:absolute;left:1460.5px;top:880.5px;" width="10" height="14" viewBox="0 0 10 14"><rect x="1" y="3.5" width="5.6" height="6.8" rx="1" stroke="#e6e6e6" stroke-width="1.1" fill="none"/><path d="M6.6 5.5 L9 4.5 V9.5 L6.6 8.5 M1.5 1.5 Q4 0.3 6.5 1.5 M1.5 12.4 Q4 13.6 6.5 12.4" stroke="#e6e6e6" stroke-width="0.9" fill="none"/></svg>
<div class="t" style="left:1480px;top:884.03px;font-size:10px;font-weight:400;color:#e6e6e6;letter-spacing:0px;">ENG</div>
<div class="t" style="left:1509.5px;top:884.03px;font-size:10px;font-weight:400;color:#e6e6e6;letter-spacing:-0.5px;">08:23 PM</div>
<svg style="position:absolute;left:1566px;top:881px;" width="13" height="14" viewBox="0 0 13 14"><path d="M0 0 H13 V11.2 H8.3 L6.5 13 L4.7 11.2 H0 Z" fill="#f4f4f4"/><path d="M2.2 2.6 H10.6 M2.2 5.6 H10.6 M2.2 7.8 H7.4" stroke="#2a2a2a" stroke-width="0.9"/></svg>
<div style="position:absolute;left:1596px;top:875px;width:1px;height:25px;background:#5a5d60"></div>
</body></html>
